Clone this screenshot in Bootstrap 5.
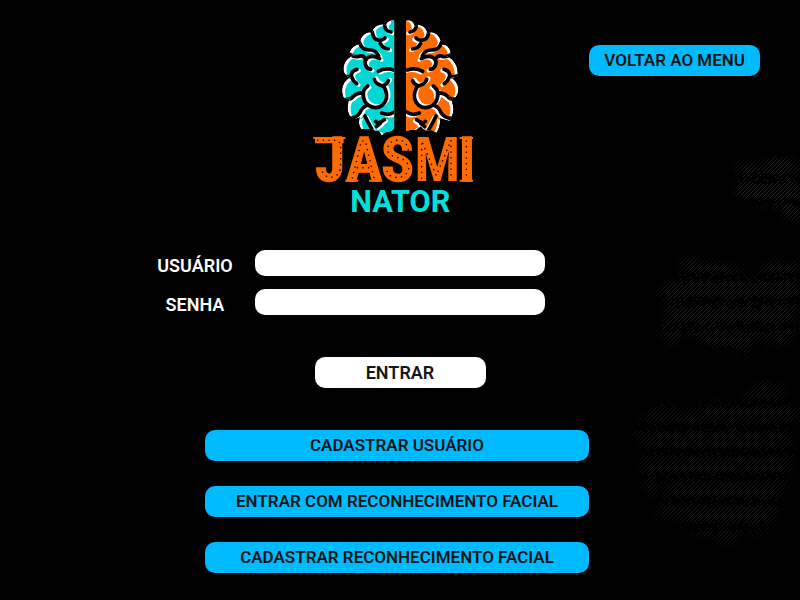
<!DOCTYPE html>
<html lang="pt-BR">
<head>
<meta charset="utf-8">
<meta name="viewport" content="width=device-width, initial-scale=1">
<title>Jasminator</title>
<link href="https://cdn.jsdelivr.net/npm/bootstrap@5.3.0/dist/css/bootstrap.min.css" rel="stylesheet">
<style>
body { background: #000; color: #fff; font-family: Roboto, "Liberation Sans", sans-serif; font-size: 18px; font-weight: 600; line-height: 24px; }
.page { min-height: 100vh; isolation: isolate; }
.backdrop { inset: 0; z-index: -1; }
.topbar { display: grid; grid-template-columns: 1fr auto 1fr; padding: 15px 40px 0; }
.logo { grid-column: 2; width: 190px; height: 210px; }
.topbar .menu-link { grid-column: 3; margin-top: 30px; }
.pill { height: 31px; padding: 0 15px; border: 0; border-radius: 10px; font-size: inherit; font-weight: inherit; line-height: 31px; color: #101616; text-transform: uppercase; white-space: nowrap; }
.pill-blue, .pill-blue:hover { background: #00baff; color: #101616; font-size: 17px; }
.pill-white, .pill-white:hover { background: #fff; color: #161616; }
.fields { display: grid; grid-template-columns: 1fr 290px 1fr; row-gap: 13px; margin-top: 25px; }
.fields label { grid-column: 1; width: 120px; justify-self: end; padding-top: 4px; line-height: 24px; height: 26px; }
.fields input { grid-column: 2; height: 26px; border: 0; border-radius: 10px; padding: 0 10px; background: #fff; color: #111; font-size: 16px; }
.enter { width: 171px; margin-top: 42px; }
.choices { width: 384px; gap: 25px; margin-top: 42px; margin-right: 6px; }
</style>
<script src="https://cdn.jsdelivr.net/npm/bootstrap@5.3.0/dist/js/bootstrap.bundle.min.js"></script>
</head>
<body>
<div class="page position-relative">
<svg class="backdrop position-absolute w-100 h-100" viewBox="0 0 800 600" preserveAspectRatio="xMaxYMid slice" aria-hidden="true">
  <defs>
    <pattern id="hatch" width="4" height="4" patternUnits="userSpaceOnUse"><path d="M-1 1L1-1M0 4L4 0M3 5L5 3" stroke="#343434" stroke-width="1"/></pattern>
    <pattern id="lines" width="197" height="25" patternUnits="userSpaceOnUse" y="165">
      <path d="M0 10h197" stroke="#000" stroke-width="5" stroke-dasharray="7 2 4 2 9 3 3 2"/>
      <path d="M2 14h195" stroke="#000" stroke-width="6" stroke-dasharray="3 2 6 2 5 1"/>
    </pattern>
    <filter id="soft" filterUnits="userSpaceOnUse" x="0" y="0" width="800" height="600">
      <feTurbulence type="fractalNoise" baseFrequency=".03" numOctaves="3" seed="4" result="noise"/>
      <feDisplacementMap in="SourceGraphic" in2="noise" scale="60" xChannelSelector="R" yChannelSelector="G"/>
      <feGaussianBlur stdDeviation="4"/>
    </filter>
    <filter id="worn" filterUnits="userSpaceOnUse" x="0" y="0" width="800" height="600">
      <feTurbulence type="fractalNoise" baseFrequency=".15" numOctaves="2" seed="8" result="noise"/>
      <feDisplacementMap in="SourceGraphic" in2="noise" scale="10" xChannelSelector="R" yChannelSelector="G"/>
    </filter>
    <mask id="patches"><g filter="url(#soft)" fill="#fff">
      <path d="M735 160L800 162V218L770 212L738 198Z" opacity=".7"/>
      <path d="M690 262L800 260V335L770 345L720 342L640 335L660 295Z" opacity=".55"/>
      <path d="M635 428L662 396L690 418L718 388L740 410L765 384L800 415V440L785 500L750 545L700 540L645 480Z" opacity=".45"/>
      <path d="M545 210L580 190L615 235V275L595 285L545 275Z" opacity=".12"/>
      <path d="M330 400L355 355L375 355L385 420L350 460L280 540L260 535Z" opacity=".12"/>
    </g></mask>
  </defs>
  <g mask="url(#patches)"><path d="M0 0H800V600H0Z" fill="url(#hatch)"/><path d="M600 130H800V600H600Z" fill="url(#lines)" filter="url(#worn)"/></g>
</svg>
<header class="topbar">
  <svg class="logo" viewBox="0 0 570 630" role="img" aria-label="Jasmi Nator">
    <defs>
      <path id="ls" d="M178 17C167 13 153 21 152 34L150 28C129 25 110 39 112 54C94 45 72 68 76 88C60 88 46 101 42 117L64 119C36 124 20 149 27 172Q34 188 48 187C24 196 14 226 27 250Q43 252 50 247C35 260 35 288 45 304Q60 315 76 305C69 320 72 333 79 342H112Q118 348 132 348L140 362L152 352Q174 350 178 340Z"/>
      <path id="rs" d="M24 17C36 12 50 20 50 36C63 22 86 34 88 56C104 43 130 61 130 89C144 85 160 100 158 119L135 121C165 125 184 154 178 185L160 188C184 203 187 231 172 248L150 244C171 262 171 298 154 317L126 309C128 328 122 344 115 354L103 346H80L68 334L54 346L40 344L24 348Z"/>
      <clipPath id="leftHalf"><use href="#ls" x="90"/></clipPath>
      <clipPath id="rightHalf"><use href="#rs" x="279"/></clipPath>
      <g id="folds" transform="translate(0 -15)">
        <path d="M239 45Q240 64 258 66"/>
        <path d="M202 66Q204 88 221 91Q235 91 240 84M226 100Q234 116 250 117"/>
        <path d="M164 98Q170 120 194 120Q214 120 221 138M224 146Q204 135 190 142Q175 152 183 168Q188 177 197 178"/>
        <path d="M134 133Q150 144 164 138Q176 136 183 148"/>
        <path d="M115 197Q140 205 140 190Q144 180 156 178M139 198Q144 214 155 221"/>
        <path d="M113 268Q135 272 146 258Q158 247 174 249M188 228Q172 240 175 258"/>
        <path d="M220 184Q240 172 266 180"/>
        <path d="M132 325Q155 325 165 308Q172 290 184 287M203 362Q188 335 180 318"/>
        <path d="M212 334Q220 344 238 329M226 340L214 350M230 309Q250 318 268 306"/>
      </g>
      <path id="loop" transform="translate(0 -15)" d="M175 250Q174 276 192 287Q214 300 233 285Q251 266 242 241Q238 229 227 226Q211 220 208 208M234 228Q248 222 250 212"/>
    </defs>
    <g clip-path="url(#leftHalf)" fill="none" stroke-linecap="round" stroke-linejoin="round">
      <use href="#ls" x="90" fill="#fff"/><use href="#ls" x="99" y="4" fill="#00d8d6"/>
      <path d="M258 10H270V342H258Z" fill="#00d8d6"/>
      <g stroke="#fff" stroke-width="11"><use href="#folds" x="6" y="4"/><use href="#loop" x="6" y="-4"/></g>
      <g stroke="#000" stroke-width="11"><use href="#folds"/><use href="#loop"/></g>
    </g>
    <g clip-path="url(#rightHalf)" fill="none" stroke-linecap="round" stroke-linejoin="round">
      <use href="#rs" x="279" fill="#fff"/><use href="#rs" x="270" y="3" fill="#ff6b00"/>
      <path d="M303 20H313V348H303Z" fill="#ff6b00"/>
      <g transform="translate(573 0) scale(-1 1)">
        <g stroke="#fff" stroke-width="11"><use href="#folds" x="6" y="4"/><use href="#loop" x="-6" y="-4"/></g>
        <g stroke="#000" stroke-width="11"><use href="#folds"/><use href="#loop"/></g>
      </g>
    </g>
    <g font-family="'Liberation Sans Narrow', 'Roboto Condensed', Roboto, sans-serif" font-weight="700" font-size="182" fill="#ff6b00" stroke="#ff6b00" stroke-width="4">
      <text y="497" x="31 123 229 328 461">JAS<tspan stroke="none">M</tspan>I</text>
      <g stroke="none">
        <path d="M25 366H121V372H116V385H30V372H25Z"/>
        <path d="M121 494H160V500H121ZM192 494H222V500H192Z"/>
        <path d="M464 366H504V372H464ZM464 494H504V500H464Z"/>
      </g>
    </g>
    <g fill="none" stroke="#1c0c00" stroke-width="5" stroke-linecap="round" stroke-dasharray="0 17">
      <path d="M38 376H98L107 386V460Q100 486 76 487Q52 484 48 456"/>
      <path d="M142 489L169 378H181L207 489M157 458H195"/>
      <path d="M310 405Q304 374 278 375Q242 380 250 412Q258 424 279 428Q312 434 311 465Q300 490 270 487Q247 484 244 460"/>
      <path d="M350 489V378L394 482L438 376V489M484 378V490"/>
    </g>
    <text x="136" y="590" font-family="Roboto, sans-serif" font-weight="700" font-size="92" fill="#00e0dc">NATOR</text>
  </svg>
  <div class="menu-link text-end"><a href="#" class="pill pill-blue d-inline-block text-decoration-none">Voltar ao menu</a></div>
</header>
<main>
  <form class="d-flex flex-column align-items-center" onsubmit="return false">
    <div class="fields w-100">
      <label for="usuario" class="text-center">USUÁRIO</label><input id="usuario" type="text" autocomplete="username">
      <label for="senha" class="text-center">SENHA</label><input id="senha" type="password" autocomplete="current-password">
    </div>
    <button type="submit" class="pill pill-white enter">Entrar</button>
    <div class="choices d-flex flex-column">
      <button type="button" class="pill pill-blue">Cadastrar usuário</button>
      <button type="button" class="pill pill-blue">Entrar com reconhecimento facial</button>
      <button type="button" class="pill pill-blue">Cadastrar reconhecimento facial</button>
    </div>
  </form>
</main>
</div>
</body>
</html>
